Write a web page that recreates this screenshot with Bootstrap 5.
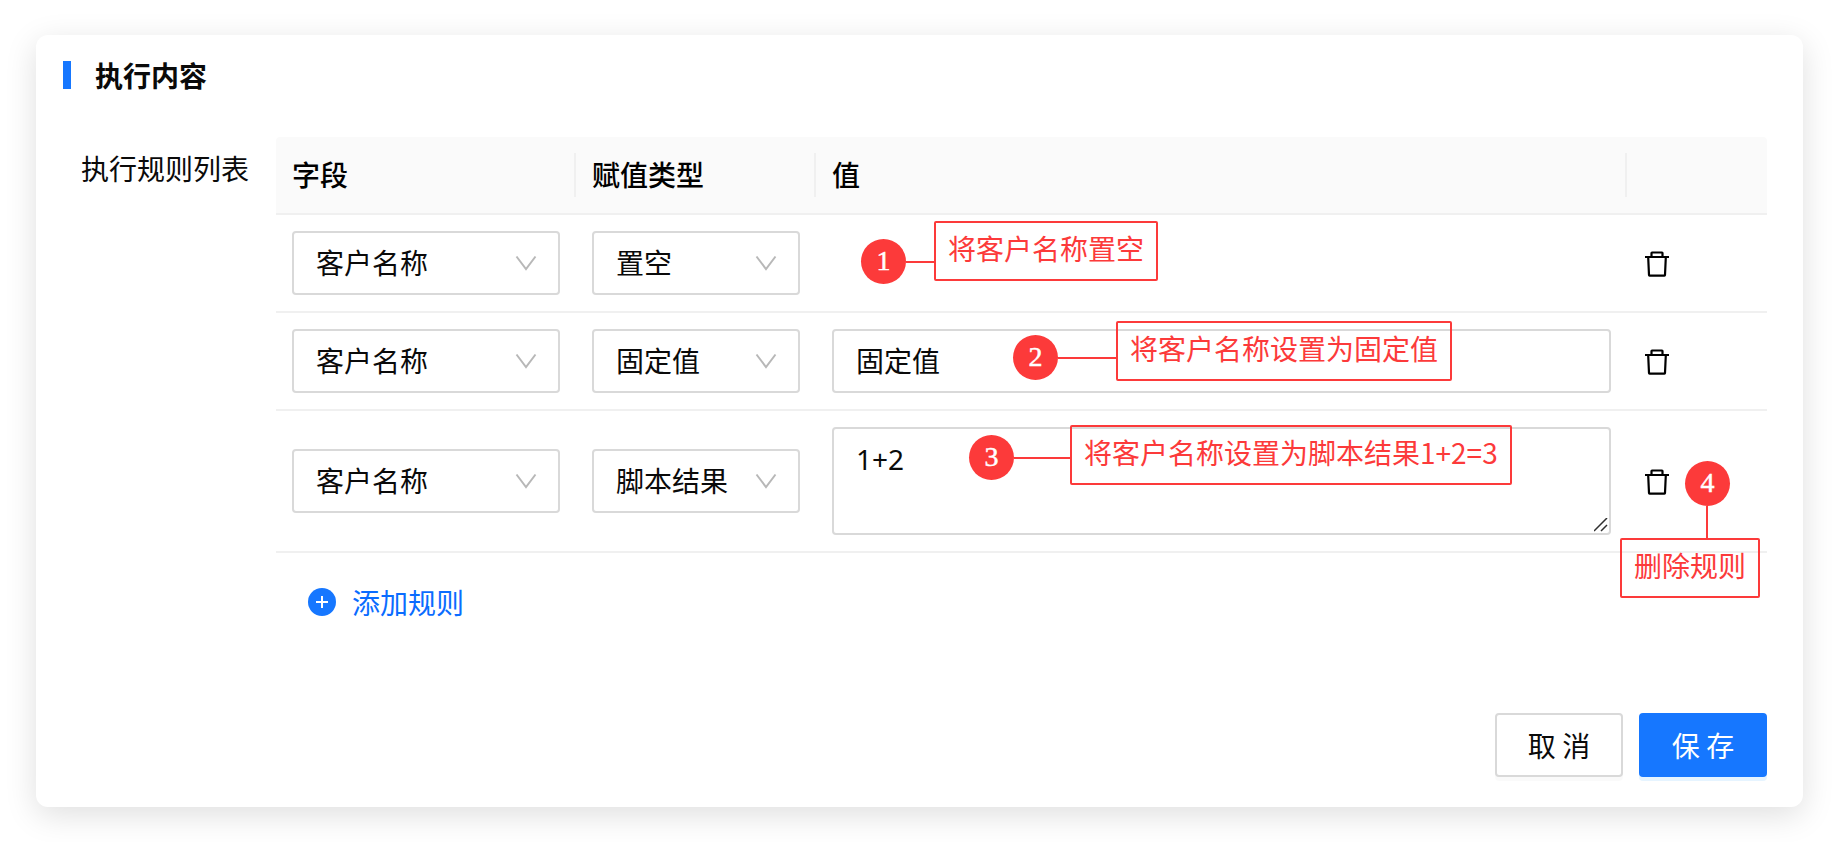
<!DOCTYPE html>
<html lang="zh-CN">
<head>
<meta charset="utf-8">
<meta name="viewport" content="width=device-width, initial-scale=1">
<title>执行内容</title>
<link href="https://cdn.jsdelivr.net/npm/bootstrap@5.3.0/dist/css/bootstrap.min.css" rel="stylesheet">
<style>
  :root {
    --accent: #1677ff;
    --note: #fc3a3a;
    --line: #f0f0f0;
    --field: #d9d9d9;
  }
  body {
    font-family: "Noto Sans CJK SC", sans-serif;
    font-size: 28px;
    line-height: 44px;
    color: #0a0a0a;
    background: #fff;
  }
  .page { padding: 35px 35px 35px 36px; }
  .panel {
    border: 0;
    border-radius: 12px;
    padding: 18px 36px 30px 27px;
    box-shadow: 0 8px 32px rgba(0, 0, 0, .13);
  }
  .panel-title { font-size: 28px; line-height: 44px; font-weight: 700; margin: 0 0 40px; gap: 24px; }
  .panel-title::before { content: ""; width: 8px; height: 28px; background: var(--accent); }
  .list-label { width: 196px; margin: 9px 17px 0 0; white-space: nowrap; padding-left: 18px; }

  .rules { --bs-table-bg: transparent; border-collapse: separate; border-spacing: 0; table-layout: fixed; color: inherit; }
  .rules > :not(caption) > * > * { padding: 16px; border-bottom: 2px solid var(--line); color: inherit; }
  .rules > thead > tr > th { padding: 15px 16px 17px; font-weight: 500; background: #fafafa; position: relative; color: #000; }
  .rules th:first-child { border-top-left-radius: 4px; }
  .rules th:last-child { border-top-right-radius: 4px; }
  .rules th:not(:last-child)::after {
    content: ""; position: absolute; right: 0; top: 16px; bottom: 16px; width: 2px; background: var(--line);
  }
  .col-field { width: 300px; }
  .col-type { width: 240px; }
  .col-ops { width: 140px; }

  .field, .field:focus {
    display: block; width: 100%; height: 64px;
    padding: 7px 22px 9px; border: 2px solid var(--field); border-radius: 4px;
    font-size: 28px; line-height: 44px; color: #0a0a0a; background-color: #fff;
  }
  select.field {
    background-image: url("data:image/svg+xml,%3Csvg xmlns='http://www.w3.org/2000/svg' viewBox='0 0 24 24' fill='none' stroke='%23b8b8b8' stroke-width='2'%3E%3Cpath d='M2.500 5.500L12 18L21.500 5.500'/%3E%3C/svg%3E");
    background-size: 24px 24px; background-position: right 20px center;
  }
  textarea.field { height: 108px; padding: 8px 22px; resize: vertical; font-family: "Noto Sans", "Noto Sans CJK SC", sans-serif; }
  textarea.field::-webkit-resizer {
    background: url("data:image/svg+xml,%3Csvg xmlns='http://www.w3.org/2000/svg' viewBox='0 0 15 15' stroke='%23303030' stroke-width='1.500'%3E%3Cpath d='M0 13L13 0M7 13L13 7'/%3E%3C/svg%3E") center / 15px 15px no-repeat;
  }

  .icon-btn { padding: 0; border: 0; background: none; color: #000; display: block; }
  .icon-btn svg, .add-link svg { display: block; width: 28px; height: 28px; }
  .add-link { gap: 16px; margin: 27px 0 0 32px; color: #0a6cff; text-decoration: none; }

  .actions { gap: 16px; margin-top: 87px; }
  .action {
    width: 128px; height: 64px; padding: 8px 0; border: 2px solid var(--field); border-radius: 4px;
    font-size: 28px; line-height: 44px; background: #fff; color: #0a0a0a; box-shadow: 0 4px 0 rgba(0, 0, 0, .02);
  }
  .action-save { background: var(--accent); border-color: var(--accent); color: #fff; box-shadow: 0 4px 0 rgba(5, 145, 255, .1); }

  .note { position: absolute; display: flex; align-items: flex-start; white-space: nowrap; color: var(--note); pointer-events: none; }
  .note-num {
    width: 45px; height: 45px; border-radius: 50%; background: var(--note); color: #fff;
    font-family: "Liberation Serif", serif; font-size: 28px; line-height: 44px; text-align: center;
    -webkit-text-stroke: 0.5px #fff;
  }
  .note-line { width: 28px; height: 2px; margin-top: 22px; background: var(--note); }
  .note-text { height: 60px; padding: 3px 12px; border: 2px solid var(--note); border-radius: 2px; }
  .note-clear { left: 45px; top: 6px; }
  .note-fixed { left: 197px; top: 8px; }
  .note-script { left: 153px; top: 14px; }
  .note-clear .note-lead { padding-top: 18px; }
  .note-fixed .note-lead { padding-top: 14px; }
  .note-script .note-lead { padding-top: 10px; }
  .note-fixed .note-line { width: 58px; }
  .note-script .note-line { width: 56px; }
  .note-delete { flex-direction: column; right: 7px; top: 50px; }
  .note-delete .note-lead { flex-direction: column; align-items: center; padding-left: 65px; }
  .note-delete .note-line { width: 2px; height: 32px; margin: 0; }
</style>
</head>
<body>
<svg class="d-none" xmlns="http://www.w3.org/2000/svg">
  <symbol id="trash" viewBox="0 0 28 28">
    <path d="M2 8H26M8.500 7.500V4Q8.500 3.500 9 3.500H19Q19.500 3.500 19.500 4V7.500M5.200 8.500L6 26Q6 26.700 6.600 26.700H21.400Q22 26.700 22 26L22.800 8.500" fill="none" stroke="currentColor" stroke-width="2.200"/>
  </symbol>
</svg>
<main class="page">
  <section class="card panel">
    <h1 class="panel-title d-flex align-items-center">执行内容</h1>
    <div class="d-flex align-items-start">
      <div class="list-label flex-shrink-0" id="rules-label">执行规则列表</div>
      <div class="flex-grow-1">
        <table class="table rules align-middle mb-0" aria-labelledby="rules-label">
          <colgroup><col class="col-field"><col class="col-type"><col><col class="col-ops"></colgroup>
          <thead>
            <tr><th scope="col">字段</th><th scope="col">赋值类型</th><th scope="col">值</th><th></th></tr>
          </thead>
          <tbody>
            <tr>
              <td><select class="form-select field" aria-label="字段"><option>客户名称</option></select></td>
              <td><select class="form-select field" aria-label="赋值类型"><option>置空</option><option>固定值</option><option>脚本结果</option></select></td>
              <td class="position-relative">
                <div class="note note-clear"><div class="note-lead d-flex"><span class="note-num">1</span><span class="note-line"></span></div><span class="note-text">将客户名称置空</span></div>
              </td>
              <td><button type="button" class="icon-btn" aria-label="删除"><svg><use href="#trash"/></svg></button></td>
            </tr>
            <tr>
              <td><select class="form-select field" aria-label="字段"><option>客户名称</option></select></td>
              <td><select class="form-select field" aria-label="赋值类型"><option>置空</option><option selected>固定值</option><option>脚本结果</option></select></td>
              <td class="position-relative">
                <input type="text" class="form-control field" aria-label="值" value="固定值">
                <div class="note note-fixed"><div class="note-lead d-flex"><span class="note-num">2</span><span class="note-line"></span></div><span class="note-text">将客户名称设置为固定值</span></div>
              </td>
              <td><button type="button" class="icon-btn" aria-label="删除"><svg><use href="#trash"/></svg></button></td>
            </tr>
            <tr>
              <td><select class="form-select field" aria-label="字段"><option>客户名称</option></select></td>
              <td><select class="form-select field" aria-label="赋值类型"><option>置空</option><option>固定值</option><option selected>脚本结果</option></select></td>
              <td class="position-relative">
                <textarea class="form-control field" aria-label="值" rows="2">1+2</textarea>
                <div class="note note-script"><div class="note-lead d-flex"><span class="note-num">3</span><span class="note-line"></span></div><span class="note-text">将客户名称设置为脚本结果1+2=3</span></div>
              </td>
              <td class="position-relative">
                <button type="button" class="icon-btn" aria-label="删除"><svg><use href="#trash"/></svg></button>
                <div class="note note-delete"><div class="note-lead d-flex"><span class="note-num">4</span><span class="note-line"></span></div><span class="note-text">删除规则</span></div>
              </td>
            </tr>
          </tbody>
        </table>
        <a href="#" class="add-link d-inline-flex align-items-center">
          <svg viewBox="0 0 28 28"><circle cx="14" cy="14" r="14" fill="#1677ff"/><path d="M14 8V20M8 14H20" stroke="#fff" stroke-width="2"/></svg>
          添加规则
        </a>
      </div>
    </div>
    <div class="actions d-flex justify-content-end">
      <button type="button" class="btn action">取 消</button>
      <button type="button" class="btn action action-save">保 存</button>
    </div>
  </section>
</main>
<script src="https://cdn.jsdelivr.net/npm/bootstrap@5.3.0/dist/js/bootstrap.bundle.min.js"></script>
</body>
</html>
